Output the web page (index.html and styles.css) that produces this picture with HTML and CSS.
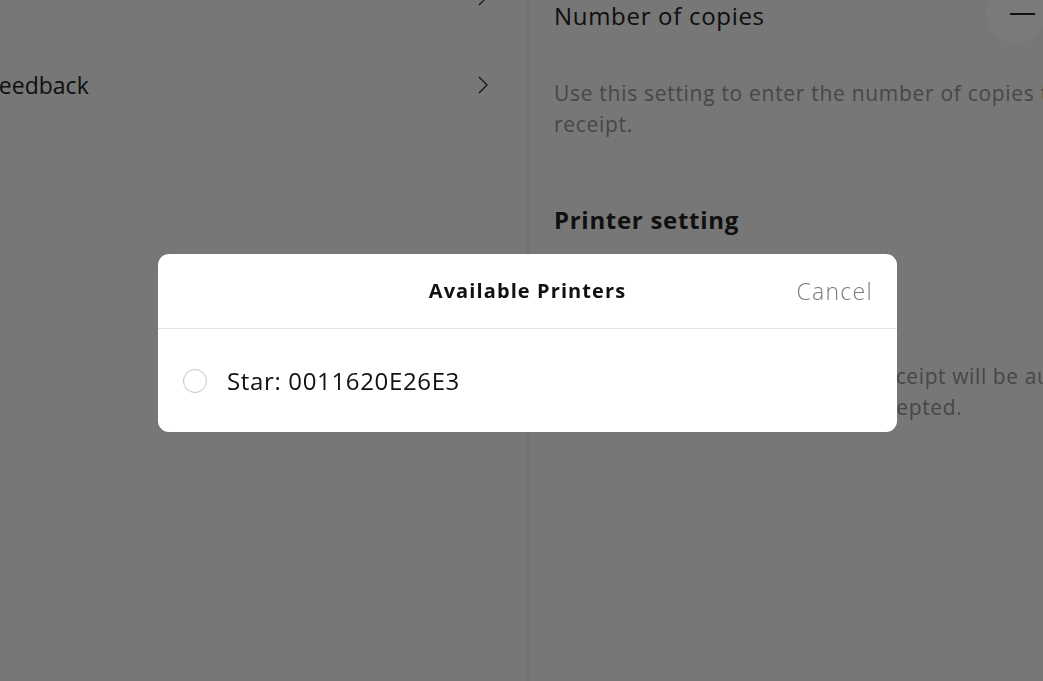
FILE: index.html
```html
<!DOCTYPE html>
<html lang="en">
<head>
<meta charset="utf-8">
<title>Settings – Available Printers</title>
<link rel="stylesheet" href="styles.css">
</head>
<body>
<div class="app">
  <aside class="menu">
    <div class="menu-row">
      <span class="menu-label"></span>
      <svg class="chev" viewBox="0 0 10 18" width="10" height="18"><path d="M1 1 L9 9 L1 17" fill="none" stroke="currentColor" stroke-width="1.2"/></svg>
    </div>
    <div class="menu-row">
      <span class="menu-label">Feedback</span>
      <svg class="chev" viewBox="0 0 10 18" width="10" height="18"><path d="M1 1 L9 9 L1 17" fill="none" stroke="currentColor" stroke-width="1.2"/></svg>
    </div>
  </aside>
  <div class="divider"></div>
  <main class="detail">
    <div class="setting-row">
      <span class="setting-title">Number of copies</span>
      <div class="stepper">
        <button class="step-btn" aria-label="Decrease"><span class="minus"></span></button>
      </div>
    </div>
    <p class="setting-desc">Use this setting to enter the number of copies to print for each<br>receipt.</p>
    <h2 class="section-title">Printer setting</h2>
    <div class="setting-row hidden-row">
      <span class="setting-title">Auto print</span>
    </div>
    <p class="setting-desc auto-desc">When turned on, a copy of the receipt will be automatically<br>printed whenever payment is accepted.</p>
  </main>
</div>

<div class="overlay">
  <div class="dialog" role="dialog" aria-labelledby="dlg-title">
    <header class="dialog-head">
      <h1 id="dlg-title" class="dialog-title">Available Printers</h1>
      <button class="cancel">Cancel</button>
    </header>
    <ul class="printer-list">
      <li class="printer">
        <span class="radio"></span>
        <span class="printer-name">Star: 0011620E26E3</span>
      </li>
    </ul>
  </div>
</div>
</body>
</html>
```

FILE: styles.css
```css
* { box-sizing: border-box; }

html, body {
  margin: 0;
  padding: 0;
  width: 1043px;
  height: 681px;
  overflow: hidden;
  background: #eeeeee;
  font-family: "Open Sans", "Noto Sans", "DejaVu Sans", sans-serif;
  color: #202020;
}

.app {
  display: flex;
  height: 681px;
}

.menu {
  width: 527px;
  flex: none;
  display: flex;
  flex-direction: column;
  margin-top: -47px;
}

.menu-row {
  height: 88px;
  display: flex;
  align-items: center;
  justify-content: space-between;
  padding: 0 39px 0 0;
  margin-left: -13px;
}

.menu-label {
  font-size: 23px;
  line-height: 32px;
  letter-spacing: 0;
}

.chev {
  color: #202020;
  display: block;
}

.divider {
  width: 2px;
  flex: none;
  background: #dee0f2;
}

.detail {
  flex: none;
  width: 760px;
  padding: 0 0 0 25px;
  margin-top: -16px;
}

.setting-row {
  height: 60px;
  display: flex;
  align-items: center;
  justify-content: space-between;
}

.setting-title {
  font-size: 24px;
  line-height: 32px;
  letter-spacing: 0.7px;
  margin-top: 4px;
}

.stepper {
  display: flex;
  margin-right: 243px;
}

.step-btn {
  width: 60px;
  height: 60px;
  border-radius: 50%;
  border: none;
  background: #f4f4f6;
  display: flex;
  align-items: center;
  justify-content: center;
  padding: 0;
}

.minus {
  display: block;
  width: 25px;
  height: 2px;
  margin-left: 12px;
  background: #202020;
}

.setting-desc {
  margin: 34px 0 0;
  font-size: 21px;
  line-height: 31px;
  letter-spacing: 0.7px;
  color: #8e8e8e;
}

.auto-desc {
  letter-spacing: 0.6px;
}

.section-title {
  margin: 64px 0 0;
  font-size: 24px;
  line-height: 32px;
  letter-spacing: 0.7px;
  font-weight: 700;
}

.hidden-row {
  margin-top: 38px;
}

.hidden-row + .setting-desc {
  margin-top: 27px;
}

.overlay {
  position: fixed;
  inset: 0;
  background: rgba(0, 0, 0, 0.5);
  display: flex;
  align-items: flex-start;
  justify-content: flex-start;
  padding: 254px 0 0 158px;
}

.dialog {
  width: 739px;
  height: 178px;
  background: #ffffff;
  border-radius: 11px;
  display: flex;
  flex-direction: column;
  overflow: hidden;
}

.dialog-head {
  height: 75px;
  flex: none;
  border-bottom: 1px solid #e3e3f0;
  display: grid;
  grid-template-columns: 1fr auto 1fr;
  align-items: center;
  padding: 0 25px 0 25px;
}

.dialog-title {
  grid-column: 2;
  margin: 0;
  font-size: 20px;
  font-weight: 700;
  letter-spacing: 1.1px;
  color: #111111;
  line-height: 28px;
  margin-top: 0;
}

.cancel {
  grid-column: 3;
  justify-self: end;
  border: none;
  background: none;
  padding: 0;
  font-family: inherit;
  font-size: 23px;
  font-weight: 300;
  letter-spacing: 1.3px;
  color: #7c7c7c;
  line-height: 32px;
  margin-top: 0;
  margin-right: -1px;
}

.printer-list {
  list-style: none;
  margin: 0;
  padding: 0;
  flex: 1;
  display: flex;
  flex-direction: column;
  justify-content: center;
}

.printer {
  display: flex;
  align-items: center;
  gap: 20px;
  padding: 0 0 0 25px;
  margin-bottom: 0;
}

.radio {
  width: 24px;
  height: 24px;
  border-radius: 50%;
  border: 1px solid #c4c4c4;
  flex: none;
}

.printer-name {
  font-size: 24px;
  line-height: 32px;
  letter-spacing: 0.65px;
  color: #111111;
}
```
